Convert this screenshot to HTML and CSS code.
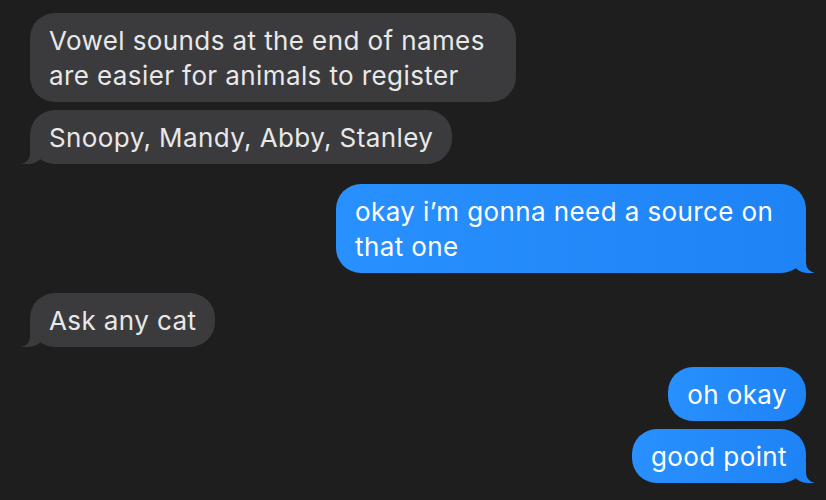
FILE: index.html
```html
<!DOCTYPE html>
<html lang="en">
<head>
    <meta charset="UTF-8">
    <meta name="viewport" content="width=device-width, initial-scale=1.0">
    <title>Messages</title>
    <link rel="stylesheet" href="styles.css">
</head>
<body>
    <div class="thread">
        <div class="group">
            <div class="bubble in wide">Vowel sounds at the end of names are easier for animals to register</div>
            <div class="bubble in tail">Snoopy, Mandy, Abby, Stanley</div>
        </div>
        <div class="group">
            <div class="bubble out tail narrow">okay i’m gonna need a source on that one</div>
        </div>
        <div class="group">
            <div class="bubble in tail">Ask any cat</div>
        </div>
        <div class="group">
            <div class="bubble out">oh okay</div>
            <div class="bubble out tail">good point</div>
        </div>
    </div>
</body>
</html>
```

FILE: styles.css
```css
body {
    margin: 0;
    background-color: #1e1e1e;
    font-family: Inter, "Noto Sans", sans-serif;
}
.thread {
    display: flex;
    flex-direction: column;
    gap: 20px;
    padding: 13px 20px 0 30px;
}
.group {
    display: flex;
    flex-direction: column;
    gap: 8px;
}
.bubble {
    position: relative;
    width: fit-content;
    padding: 10px 19px 9px;
    font-size: 26px;
    letter-spacing: 0.4px;
    line-height: 35px;
    border-radius: 25px;
}
.in {
    align-self: flex-start;
    background-color: #3b3b3d;
    color: #e8e8e8;
}
.out {
    align-self: flex-end;
    background: linear-gradient(90deg, #2990ff, #1e83f5);
    color: #fff;
}
.wide {
    max-width: 448px;
}
.narrow {
    max-width: 422px;
    padding-right: 29px;
}
/* tails */
.tail::before,
.tail::after {
    content: "";
    position: absolute;
    bottom: 0;
    height: 22px;
}
.in.tail::before {
    left: -8px;
    width: 22px;
    background-color: #3b3b3d;
    border-bottom-right-radius: 16px 14px;
}
.in.tail::after {
    left: -12px;
    width: 12px;
    background-color: #1e1e1e;
    border-bottom-right-radius: 10px;
}
.out.tail::before {
    right: -8px;
    width: 22px;
    background-color: #1e83f5;
    border-bottom-left-radius: 16px 14px;
}
.out.tail::after {
    right: -12px;
    width: 12px;
    background-color: #1e1e1e;
    border-bottom-left-radius: 10px;
}
```
